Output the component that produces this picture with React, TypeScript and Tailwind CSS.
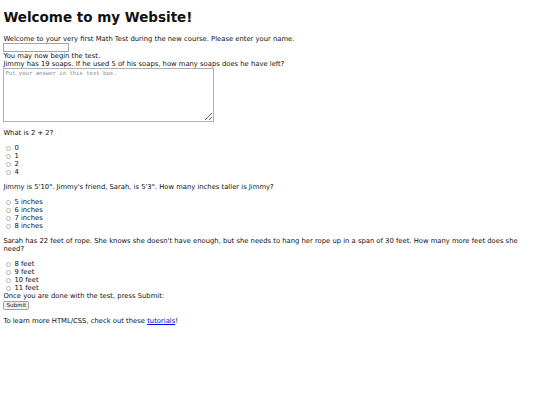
import React from 'react';

const font = { fontFamily: '"DejaVu Sans", Verdana, sans-serif' };

const quiz = [
  { q: 'What is 2 + 2?', options: ['0', '1', '2', '4'], gap: true },
  {
    q: 'Jimmy is 5\'10". Jimmy\'s friend, Sarah, is 5\'3". How many inches taller is Jimmy?',
    options: ['5 inches', '6 inches', '7 inches', '8 inches'],
    gap: true,
  },
  {
    q: "Sarah has 22 feet of rope. She knows she doesn't have enough, but she needs to hang her rope up in a span of 30 feet. How many more feet does she need?",
    options: ['8 feet', '9 feet', '10 feet', '11 feet'],
    gap: false,
  },
];

function Radio({ label, name }: { label: string; name: string }) {
  return (
    <label className="flex items-center h-[8px]">
      <input
        type="radio"
        name={name}
        className="appearance-none w-[5px] h-[5px] rounded-full border-[0.5px] border-[#b5b5b5] bg-white ml-[2.5px] mr-[3.5px] mt-[0.5px]"
      />
      <span>{label}</span>
    </label>
  );
}

export default function App() {
  return (
    <div className="bg-white text-[#111] w-[540px] h-[405px] px-[3.4px] overflow-hidden" style={font}>
      <h1 className="text-[13.5px] leading-[16px] font-bold pt-[8.5px] mb-[10px]">Welcome to my Website!</h1>

      <div className="text-[6.8px] leading-[8px]">
        <div>Welcome to your very first Math Test during the new course. Please enter your name.</div>
        <input
          type="text"
          className="block w-[66px] h-[8.5px] border-[0.5px] border-[#a5a5a5] mt-[0.5px] mb-[0.5px] bg-white"
        />
        <div>You may now begin the test.</div>
        <div>Jimmy has 19 soaps. If he used 5 of his soaps, how many soaps does he have left?</div>
        <textarea
          placeholder="Put your answer in this text box."
          className="block w-[211px] h-[54px] border-[0.5px] border-[#b0b0b0] resize p-[1px] text-[5.6px] leading-[6.5px] placeholder:text-[#8a8a8a] bg-white"
          style={{ fontFamily: '"DejaVu Sans Mono", "Liberation Mono", monospace' }}
        />

        {quiz.map((item, i) => (
          <div key={i}>
            <p className="my-[7px]">{item.q}</p>
            <div className={item.gap ? 'mb-[7px]' : ''}>
              {item.options.map((o) => (
                <Radio key={o} label={o} name={'q' + i} />
              ))}
            </div>
          </div>
        ))}

        <div>Once you are done with the test, press Submit:</div>
        <button className="block h-[9px] px-[2px] text-[5.6px] leading-[7px] border-[0.5px] border-[#a0a0a0] rounded-[1.5px] bg-[#efefef] mt-[0.5px]">
          Submit
        </button>
        <p className="my-[7px]">
          To learn more HTML/CSS, check out these{' '}
          <a href="#" className="text-[#0000ee] underline">
            tutorials
          </a>
          !
        </p>
      </div>
    </div>
  );
}
